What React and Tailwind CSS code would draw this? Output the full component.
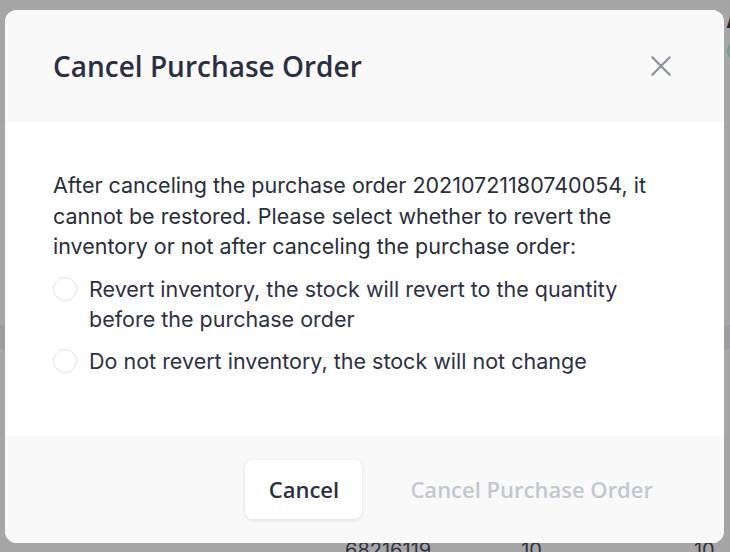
import React, { useState } from 'react';

const options = [
  { id: 'revert', label: 'Revert inventory, the stock will revert to the quantity before the purchase order' },
  { id: 'keep', label: 'Do not revert inventory, the stock will not change' },
];

const CancelOrderDialog = () => {
  const [choice, setChoice] = useState('');

  return (
    <div className="relative h-[552px] w-[730px] overflow-hidden bg-[#a6a6a7] font-['Inter',sans-serif]">
      {/* page peeking out behind the dialog */}
      <div className="flex flex-col pt-[8px] pl-[726px] text-[24px] font-semibold text-[#232530]">
        <span className="h-[32px] leading-[24px]">A</span>
        <span className="ml-[1px] h-[22px] w-[22px] rounded-full border-2 border-[#6f9e8c]"></span>
      </div>
      <div className="mt-[263px] h-[24px] w-full bg-[#9d9da1]"></div>
      <div className="absolute bottom-[-8px] left-0 flex w-full text-[20px] leading-[20px] text-[#303340]">
        <span className="ml-[345px]">68216119</span>
        <span className="ml-[90px]">10</span>
        <span className="ml-[152px]">10</span>
      </div>

      {/* dialog */}
      <div className="absolute left-[5px] top-[10px] flex h-[533px] w-[719px] flex-col overflow-hidden rounded-[12px] bg-white">
        <div className="flex h-[112px] shrink-0 items-center justify-between bg-[#f9f9fa] pl-[48px] pr-[50px]">
          <h2 className="font-['Open_Sans',sans-serif] text-[28px] font-semibold text-[#2c2f42]">Cancel Purchase Order</h2>
          <button className="text-[#8a90a0]">
            <svg width="26" height="26" viewBox="0 0 24 24" fill="none" stroke="currentColor" strokeWidth="2" strokeLinecap="round">
              <path d="M4 4l16 16M20 4L4 20" />
            </svg>
          </button>
        </div>

        <div className="flex flex-1 flex-col bg-white px-[48px] pt-[48px] text-[21.5px] leading-[30.5px] text-[#2a2d3a]">
          <p>
            After canceling the purchase order 20210721180740054, it cannot be restored. Please select whether to revert the inventory or not after canceling the purchase order:
          </p>
          <div className="mt-[12px] flex flex-col gap-[11px]">
            {options.map((o) => (
              <label key={o.id} className="flex cursor-pointer items-start gap-[12px] text-[#2e3144]" onClick={() => setChoice(o.id)}>
                <span className={`mt-[3px] h-[24px] w-[24px] shrink-0 rounded-full border ${choice === o.id ? 'border-[6px] border-[#3b82f6]' : 'border-[#dcdfe6]'} bg-white`}></span>
                <span className="pr-[20px]">{o.label}</span>
              </label>
            ))}
          </div>
        </div>

        <div className="flex h-[107px] shrink-0 items-center justify-end gap-[24px] bg-[#f9f9fa] pr-[47px] font-['Open_Sans',sans-serif] text-[22px] font-semibold">
          <button className="ml-[1px] h-[59px] w-[117px] rounded-[8px] bg-white text-[#2c2f42] shadow-[0_1px_4px_rgba(0,0,0,0.12)]">Cancel</button>
          <button className="h-[59px] px-[24px] text-[#c3c7d2]" disabled={!choice}>Cancel Purchase Order</button>
        </div>
      </div>
    </div>
  );
};

export default CancelOrderDialog;
